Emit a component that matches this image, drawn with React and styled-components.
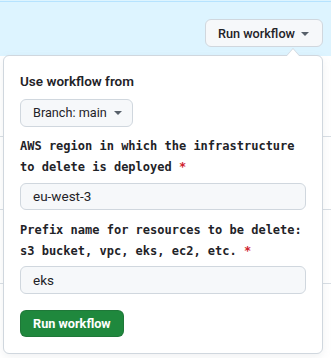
import React from "react";
import styled, { createGlobalStyle } from "styled-components";

const GlobalStyle = createGlobalStyle`
  body {
    margin: 0;
    background: #ffffff;
    font-family: Roboto, "Liberation Sans", Arial, sans-serif;
    color: #1f2328;
  }
`;

const Page = styled.div`
  position: relative;
  width: 331px;
  height: 358px;
  overflow: hidden;
`;

const Banner = styled.div`
  height: 56px;
  box-sizing: border-box;
  background: linear-gradient(#ddf4ff 1px, #b6e3ff 1px 2px, #ddf4ff 2px);
  display: flex;
  justify-content: flex-end;
  align-items: flex-start;
  padding: 19px 8px 0 0;
`;

const Row = styled.div`
  height: ${(p) => p.h}px;
  border-bottom: 1px solid #d8dee4;
`;

const Button = styled.button`
  display: inline-flex;
  align-items: center;
  gap: ${(p) => p.gap || 7}px;
  height: 28px;
  box-sizing: border-box;
  padding: 0 ${(p) => p.pr || 12}px 0 12px;
  border-radius: 6px;
  font-family: Roboto, "Liberation Sans", Arial, sans-serif;
  font-size: 12.7px;
  font-weight: ${(p) => (p.primary ? 700 : p.light ? 400 : 500)};
  color: ${(p) => (p.primary ? "#ffffff" : "#1f2328")};
  background: ${(p) => (p.primary ? "#1f883d" : "#f6f8fa")};
  border: 1px solid
    ${(p) => (p.primary ? "rgba(31,35,40,0.15)" : "#d0d7de")};
  cursor: pointer;
`;

const Caret = styled.span`
  width: 0;
  height: 0;
  border-left: 4px solid transparent;
  border-right: 4px solid transparent;
  border-top: 4px solid #57606a;
  margin-top: 1px;
`;

const Popover = styled.div`
  position: absolute;
  top: 55px;
  left: 3px;
  width: 320px;
  height: 299px;
  box-sizing: border-box;
  background: #ffffff;
  border: 1px solid #d0d7de;
  border-radius: 6px;
  box-shadow: 0 3px 8px rgba(140, 149, 159, 0.12);
  padding: 15px 16px 16px;
  display: flex;
  flex-direction: column;
  align-items: flex-start;

  &::before,
  &::after {
    content: "";
    position: absolute;
    left: 282px;
    width: 0;
    height: 0;
    border-left: 7px solid transparent;
    border-right: 7px solid transparent;
  }
  &::before {
    top: -8px;
    border-bottom: 8px solid #d0d7de;
  }
  &::after {
    top: -7px;
    border-bottom: 8px solid #ffffff;
  }
`;

const Heading = styled.div`
  font-size: 13.5px;
  font-weight: 600;
  line-height: 21px;
  margin-bottom: 7px;
`;

const Label = styled.label`
  font-family: "DejaVu Sans Mono", "Liberation Mono", monospace;
  font-size: 12px;
  font-weight: 700;
  line-height: 21px;
  margin-top: ${(p) => p.top}px;
  color: #1f2328;
`;

const Required = styled.span`
  color: #cf222e;
`;

const Input = styled.div`
  width: 286px;
  height: 28px;
  box-sizing: border-box;
  margin-top: ${(p) => p.top}px;
  padding: 0 12px;
  display: flex;
  align-items: center;
  background: #f6f8fa;
  border: 1px solid #d0d7de;
  border-radius: 6px;
  font-size: 13.5px;
  color: #1f2328;
`;

const Submit = styled(Button)`
  margin-top: 16px;
`;

export default function App() {
  return (
    <Page>
      <GlobalStyle />
      <Banner>
        <Button pr={13} gap={6}>
          <span>Run workflow</span>
          <Caret />
        </Button>
      </Banner>
      <Row h={80} />
      <Row h={72} />
      <Row h={73} />

      <Popover>
        <Heading>Use workflow from</Heading>
        <Button light pr={10}>
          <span>Branch: main</span>
          <Caret />
        </Button>
        <Label top={9}>
          AWS region in which the infrastructure to delete is deployed{" "}
          <Required>*</Required>
        </Label>
        <Input top={5}>eu-west-3</Input>
        <Label top={10}>
          Prefix name for resources to be delete: s3 bucket, vpc, eks, ec2,
          etc. <Required>*</Required>
        </Label>
        <Input top={4}>eks</Input>
        <Submit primary>Run workflow</Submit>
      </Popover>
    </Page>
  );
}
